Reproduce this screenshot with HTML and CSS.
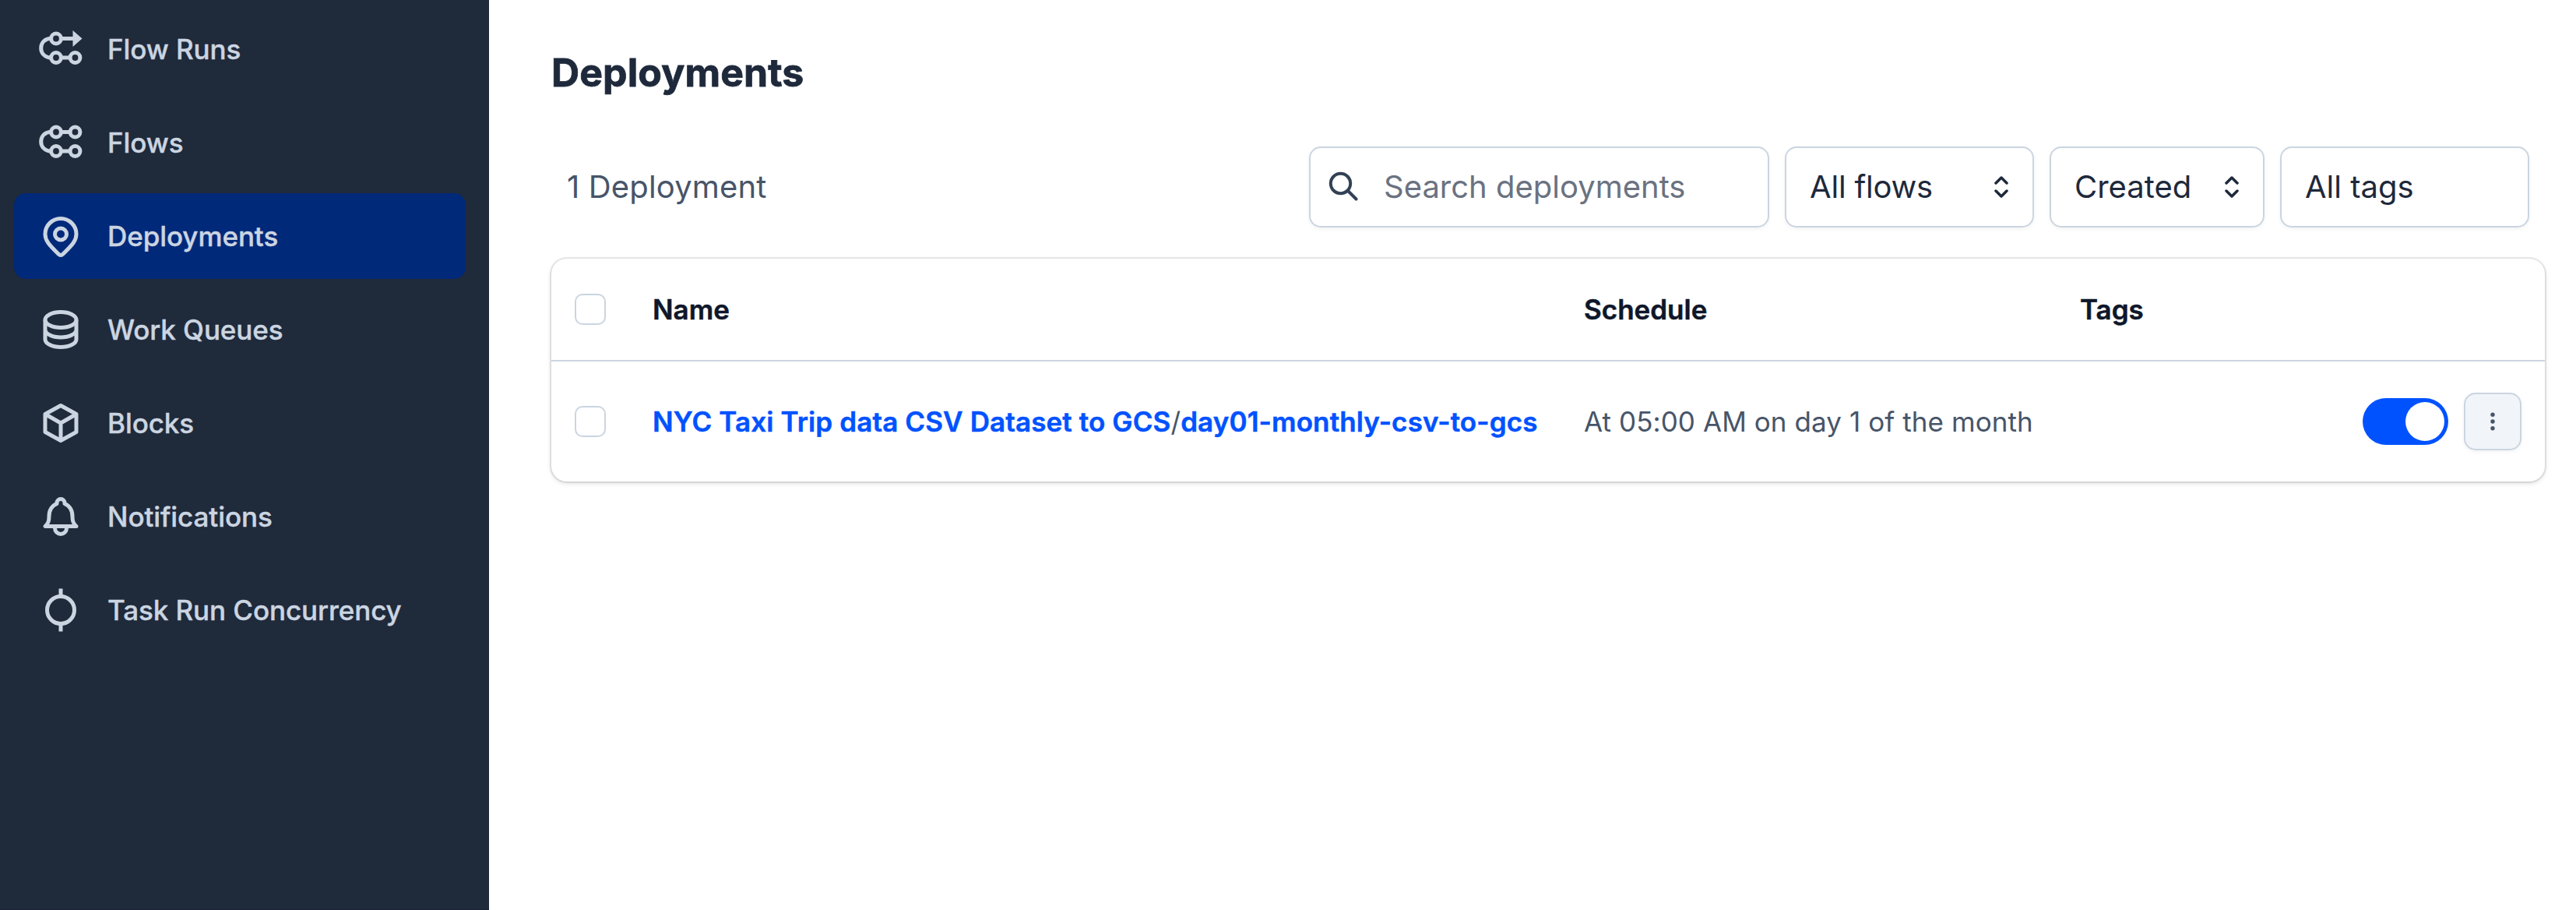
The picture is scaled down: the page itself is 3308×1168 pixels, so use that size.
FILE: index.html
```html
<!DOCTYPE html>
<html lang="en">
<head>
<meta charset="utf-8">
<title>Deployments</title>
<link rel="stylesheet" href="styles.css">
</head>
<body>
<div class="app">
  <nav class="sidebar">
    <a class="nav-item"><svg class="nav-icon" viewBox="0 0 60 60"><circle cx="24" cy="16.5" r="6.4"/><circle cx="24" cy="41" r="6.4"/><circle cx="48.5" cy="41" r="6.4"/><path d="M30.5 16.5H47M30.5 41H42M18 16C8 17 4.700 23 4.700 29S9 40.500 18 41.500"/><path class="solid" d="M45.500 6L57.500 16.500L45.500 27Z"/></svg><span>Flow Runs</span></a>
    <a class="nav-item"><svg class="nav-icon" viewBox="0 0 60 60"><circle cx="24" cy="16.5" r="6.4"/><circle cx="48.500" cy="16.500" r="6.400"/><circle cx="24" cy="41" r="6.4"/><circle cx="48.5" cy="41" r="6.4"/><path d="M30.5 16.5H42M30.5 41H42M18 16C8 17 4.700 23 4.700 29S9 40.500 18 41.500"/></svg><span>Flows</span></a>
    <a class="nav-item active"><svg class="nav-icon" viewBox="0 0 60 60"><path d="M50 27.500C50 36 45 41 33 53Q30 56 27 53C15 41 10 36 10 27.500A20 20 0 0 1 50 27.500Z"/><circle cx="30" cy="27.500" r="7.500"/></svg><span>Deployments</span></a>
    <a class="nav-item"><svg class="nav-icon" viewBox="0 0 60 60"><ellipse cx="30" cy="17.500" rx="20" ry="10"/><path d="M10 17.500V42.500C10 48 19 52.500 30 52.500S50 48 50 42.500V17.500M10 30C10 35.500 19 40 30 40S50 35.500 50 30"/></svg><span>Work Queues</span></a>
    <a class="nav-item"><svg class="nav-icon" viewBox="0 0 60 60"><path d="M30 7.500L50 18.500V41.500L30 52.500L10 41.500V18.500ZM10 18.500L30 30L50 18.500M30 30V52.500"/></svg><span>Blocks</span></a>
    <a class="nav-item"><svg class="nav-icon" viewBox="0 0 60 60"><path d="M10 42.500H50C46.500 39 45 36.500 45 30C45 21 41 16 35 13.500V12.500A5 5 0 0 0 25 12.500V13.500C19 16 15 21 15 30C15 36.500 13.500 39 10 42.500ZM22.500 42.500V45A7.500 7.500 0 0 0 37.500 45V42.500"/></svg><span>Notifications</span></a>
    <a class="nav-item"><svg class="nav-icon" viewBox="0 0 60 60"><circle cx="30" cy="30" r="17.500"/><path d="M30 2.500V12.500M30 47.500V57.500"/></svg><span>Task Run Concurrency</span></a>
  </nav>
  <main class="main">
    <h1 class="title">Deployments</h1>
    <div class="toolbar">
      <span class="count">1 Deployment</span>
      <div class="field search"><svg class="search-icon" viewBox="0 0 40 40"><circle cx="16.500" cy="16.500" r="12.700"/><path d="M25.500 25.500L36.500 36.500"/></svg><span>Search deployments</span></div>
      <div class="field wide"><span class="flows">All flows</span><svg class="chevrons" viewBox="0 0 20 30"><path d="M3 11L10 4L17 11M3 21L10 28L17 21"/></svg></div>
      <div class="field narrow"><span>Created</span><svg class="chevrons" viewBox="0 0 20 30"><path d="M3 11L10 4L17 11M3 21L10 28L17 21"/></svg></div>
      <div class="field wide"><span>All tags</span></div>
    </div>
    <section class="card">
      <div class="row head">
        <span class="checkbox"></span><span>Name</span><span>Schedule</span><span>Tags</span>
      </div>
      <div class="row">
        <span class="checkbox"></span>
        <span class="name"><a class="link">NYC Taxi Trip data CSV Dataset to GCS</a>/<a class="link">day01-monthly-csv-to-gcs</a></span>
        <span class="schedule">At 05:00 AM on day 1 of the month</span>
        <span></span>
        <div class="actions">
          <span class="toggle"><span class="knob"></span></span>
          <span class="menu"><svg class="dots" viewBox="0 0 10 30"><circle cx="5" cy="6.300" r="2.700"/><circle cx="5" cy="15" r="2.700"/><circle cx="5" cy="23.700" r="2.700"/></svg></span>
        </div>
      </div>
    </section>
  </main>
</div>
</body>
</html>
```
FILE: styles.css
```css
* { box-sizing: border-box; }
body { margin: 0; background: #fff; font-family: Inter, sans-serif; font-size: 35px; color: #475569; }
.app { display: flex; height: 1168px; overflow: hidden; }
.sidebar { width: 628px; flex: none; padding: 8px 30px 0 18px; background: #1f2a3a; border-bottom: 1px solid #1b2236; display: flex; flex-direction: column; gap: 10px; }
.nav-item { height: 110px; flex: none; display: flex; align-items: center; gap: 30px; padding: 0 30px; border-radius: 15px; color: #cbd5e1; font-weight: 500; letter-spacing: -.08px; -webkit-text-stroke: .4px; white-space: nowrap; }
.active { background: #00297a; }
.nav-icon { width: 60px; height: 60px; flex: none; fill: none; stroke: #cbd5e1; stroke-width: 5; stroke-linejoin: round; }
.solid { fill: #cbd5e1; stroke: none; }
.main { flex: 1; padding: 62px 40px 0 80px; background: #fff; }
.title { margin: 0; font-size: 50px; line-height: 62px; font-weight: 700; letter-spacing: .1px; -webkit-text-stroke: .8px; color: #1e293b; }
.toolbar { display: flex; align-items: center; gap: 20px; height: 104px; margin: 64px 20px 40px; font-size: 40px; }
.count { flex: 1; padding-bottom: 2px; letter-spacing: .15px; white-space: nowrap; }
.field { height: 104px; flex: none; display: flex; align-items: center; justify-content: space-between; padding: 0 30px 2px; border: 2px solid #cbd5e1; border-radius: 15px; color: #1e293b; background: #fff; box-shadow: 0 2px 5px rgba(0,0,0,.05); white-space: nowrap; }
.search { width: 591px; justify-content: flex-start; gap: 32px; padding-left: 22px; color: #6b7280; }
.search-icon { width: 40px; height: 40px; fill: none; stroke: #334155; stroke-width: 4; stroke-linecap: round; }
.flows { letter-spacing: -.2px; }
.wide { width: 320px; }
.narrow { width: 276px; }
.chevrons { width: 20px; height: 30px; fill: none; stroke: #1e293b; stroke-width: 3.500px; stroke-linecap: round; stroke-linejoin: round; }
.card { border-radius: 20px; background: #fff; box-shadow: 0 0 0 2px rgba(0,0,0,.08), 0 2px 6px rgba(0,0,0,.15); }
.row { display: grid; grid-template-columns: 100px 1196px 637px 1fr auto; align-items: center; height: 154px; padding: 0 30px; white-space: nowrap; }
.head { height: 132px; border-bottom: 2px solid #cbd5e1; color: #0f172a; font-weight: 600; -webkit-text-stroke: .5px; }
.checkbox { width: 40px; height: 40px; border: 2px solid #cbd5e1; border-radius: 10px; }
.link { color: #0052ff; font-weight: 600; letter-spacing: .13px; -webkit-text-stroke: .5px; }
.schedule { letter-spacing: .08px; }
.actions { display: flex; align-items: center; gap: 20px; }
.toggle { width: 110px; height: 60px; padding: 5px; border-radius: 30px; background: #0052ff; display: flex; justify-content: flex-end; }
.knob { width: 50px; height: 50px; border-radius: 50%; background: #fff; }
.menu { width: 74px; height: 74px; border: 2px solid #cbd5e1; border-radius: 15px; background: #f1f5f9; box-shadow: 0 2px 5px rgba(0,0,0,.05); display: flex; align-items: center; justify-content: center; }
.dots { width: 10px; height: 30px; fill: #475569; }
```
